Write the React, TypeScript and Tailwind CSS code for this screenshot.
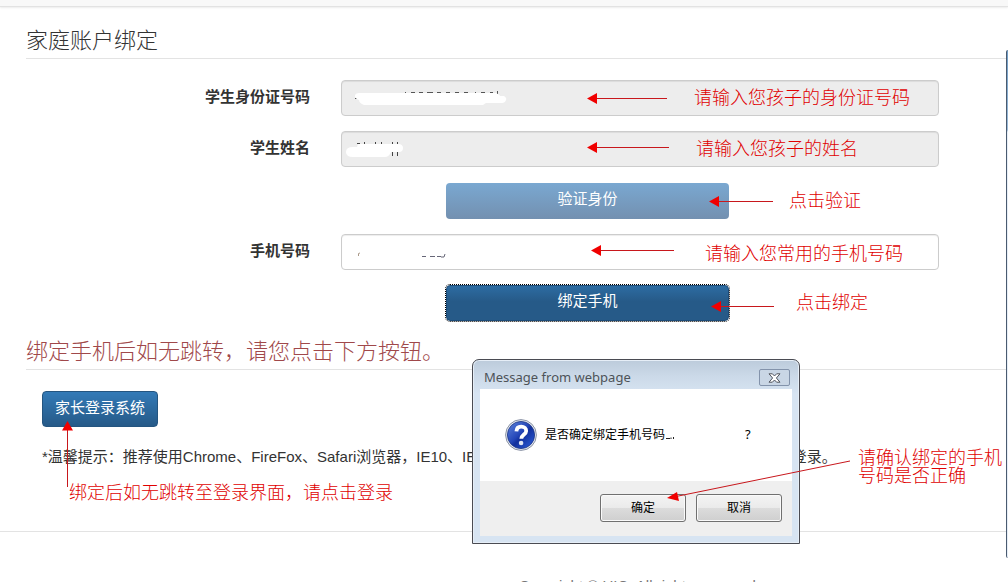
import type { ReactNode } from "react";

function LeftArrow({ className = "", length }: { className?: string; length: number }) {
  return (
    <svg className={`relative shrink-0 ${className}`} width={length} height="12" viewBox={`0 0 ${length} 12`} aria-hidden="true">
      <path d={`M8 6.5H${length}`} stroke="#c8171c" strokeWidth="1" fill="none" />
      <path d="M0 6.5L10 1V12Z" fill="#f00000" />
    </svg>
  );
}

function Note({ className = "", children }: { className?: string; children: ReactNode }) {
  return (
    <p className={`text-lg leading-[18px] font-light whitespace-nowrap text-[#e00000] ${className}`}>
      {children}
    </p>
  );
}

interface FieldProps {
  id: string;
  label: string;
  disabled?: boolean;
  scribble: ReactNode;
  children: ReactNode;
}

function Field({ id, label, disabled, scribble, children }: FieldProps) {
  return (
    <div className="flex gap-[31px]">
      <label htmlFor={id} className="w-[284px] shrink-0 pt-[7px] text-right leading-5 font-bold">
        {label}
      </label>
      <div className="relative max-w-[598px] grow">
        <input
          id={id}
          type="text"
          disabled={disabled}
          className="block h-9 w-full rounded border border-[#ccc] bg-white px-3 shadow-[inset_0_1px_1px_rgba(0,0,0,0.075)] outline-none disabled:bg-[#ededed]"
        />
        <div className="pointer-events-none absolute inset-0 flex items-center">
          <div className="w-[246px] shrink-0">{scribble}</div>
          {children}
        </div>
      </div>
    </div>
  );
}

function SectionTitle({ className, children }: { className: string; children: ReactNode }) {
  return <h2 className={`border-b border-[#e3e3e3] text-[22px] leading-[34px] font-light ${className}`}>{children}</h2>;
}

function DialogButton({ children }: { children: ReactNode }) {
  return (
    <button
      type="button"
      className="h-7 w-[86px] rounded-[3px] border border-[#707070] bg-[linear-gradient(#f3f3f3,#ebebeb_48%,#dcdcdc_50%,#cfcfcf)] text-xs text-black shadow-[inset_0_0_0_1px_#fafafa]"
    >
      {children}
    </button>
  );
}

function QuestionIcon() {
  return (
    <svg width="32" height="32" viewBox="0 0 32 32" aria-hidden="true" className="shrink-0">
      <defs>
        <linearGradient id="ball" x1="0" y1="0" x2="1" y2="1">
          <stop offset="0" stopColor="#5f86dc" />
          <stop offset="0.45" stopColor="#2446b8" />
          <stop offset="0.55" stopColor="#12309c" />
          <stop offset="1" stopColor="#2f62e0" />
        </linearGradient>
      </defs>
      <circle cx="16" cy="16" r="15.4" fill="#e6eaf0" stroke="#8b93a5" strokeWidth="1" />
      <circle cx="16" cy="16" r="13.6" fill="url(#ball)" stroke="#1b3384" strokeWidth="0.8" />
      <path d="M11.4 12.4C11.6 9 13.4 7.7 16.2 7.7C19.4 7.7 21.200 9.500 21.200 12C21.200 15.400 16.400 15.800 16.300 19.800" fill="none" stroke="#fff" strokeWidth="3.8" />
      <circle cx="16.1" cy="24" r="2.3" fill="#dfe5f3" />
    </svg>
  );
}

function ConfirmDialog() {
  return (
    <div
      role="dialog"
      aria-labelledby="dialog-title"
      className="w-[328px] rounded-t-[7px] border border-[#4a4b52] bg-[linear-gradient(#bccbdb,#cbd9e8_16px,#d7e4f2_34px,#d7e4f2)] px-[7px] pb-[7px] shadow-[inset_0_0_0_1px_#e6eef7]"
    >
      <div className="flex h-[29px] items-start justify-between pt-[9px] pr-0.5 pl-1">
        <h3 id="dialog-title" className="font-['Noto_Sans'] text-[13px] leading-4 text-[#4d5358]">
          Message from webpage
        </h3>
        <button type="button" aria-label="Close" className="flex h-[17px] w-[31px] items-center justify-center rounded-[2px] border border-[#8393ab] bg-[#c9d6e5]">
          <svg width="13" height="10" viewBox="0 0 13 10" aria-hidden="true">
            <path d="M1 0.8H4.4L6.5 3L8.6 0.8H12L8.4 5L12 9.2H8.6L6.5 7L4.4 9.2H1L4.6 5Z" fill="#fff" stroke="#50545e" strokeWidth="1" />
          </svg>
        </button>
      </div>
      <div className="flex h-[92px] items-center gap-2 bg-white pl-[25px] text-xs text-black">
        <QuestionIcon />
        <p className="flex items-center">
          是否确定绑定手机号码
          <svg width="10" height="12" viewBox="0 0 10 12" aria-hidden="true">
            <path d="M1 9.5H5M6 8.5V10M8.5 8V10" stroke="#222" fill="none" />
          </svg>
          <span className="ml-[70px] font-['Noto_Sans'] text-[13px]">?</span>
        </p>
      </div>
      <div className="flex h-[55px] justify-end gap-2.5 bg-[#efefef] pt-[13px] pr-2.5">
        <DialogButton>确定</DialogButton>
        <DialogButton>取消</DialogButton>
      </div>
    </div>
  );
}

function IdScribble() {
  return (
    <svg className="ml-3 h-5 w-40" viewBox="0 0 160 20" aria-hidden="true">
      <path d="M2 10.500H7M3 9.500H5M52.500 4V6M58 4.500H62M66 4.500H70M74 4.500H80M84 4.500H88M93 4.500H97M102 4.500H106M111 4.500H115M122.500 4V6M128 4.500H132M137 4.500H140M144.500 3V8" stroke="#555" fill="none" />
      <path d="M6 5H143Q147 7 147 8H151Q154 10 153 12Q152 15 149 15H133L130 17H11Q6 15 6 12Q1 10 2 7Q3 5 6 5Z" fill="#fff" />
    </svg>
  );
}

function NameScribble() {
  return (
    <svg className="ml-1 h-5 w-16" viewBox="0 0 64 20" aria-hidden="true">
      <path d="M12 4.500H15M19.500 3V6M30.500 3V6M36.500 3V6M47.500 3V6M52.500 3V6M47.500 13V17M52.500 13V17" stroke="#444" fill="none" />
      <path d="M13 5H53Q58 5 58 9Q58 13 54 13H46Q44 18 40 18H8Q1 18 1 13Q1 8 8 8H12Z" fill="#fff" />
    </svg>
  );
}

function PhoneScribble() {
  return (
    <svg className="ml-3 h-4 w-24" viewBox="0 0 96 16" aria-hidden="true">
      <path d="M5.500 12V9.500L7 9" stroke="#a98" fill="none" />
      <path d="M69 12.500H73M77 12.500H82M84 12.500H88M88 13H91L92 10" stroke="#667" fill="none" />
    </svg>
  );
}

export default function App() {
  return (
    <div className="relative h-screen overflow-hidden bg-white font-['Liberation_Sans','Noto_Sans_CJK_SC',sans-serif] text-[15px] text-[#333]">
      <div className="h-[7px] border-b border-[#e2e2e2] bg-[#f8f8f8] shadow-[0_1px_2px_rgba(0,0,0,0.08)]" />

      <main className="pl-[26px]">
        <SectionTitle className="mt-[17px]">家庭账户绑定</SectionTitle>

        <form className="mt-[21px] flex flex-col gap-4">
          <div className="flex flex-col gap-[15px]">
            <Field id="student-id" label="学生身份证号码" disabled scribble={<IdScribble />}>
              <LeftArrow length={80} />
              <Note className="ml-[27px]">请输入您孩子的身份证号码</Note>
            </Field>
            <Field id="student-name" label="学生姓名" disabled scribble={<NameScribble />}>
              <LeftArrow length={82} className="mb-1" />
              <Note className="ml-[27px]">请输入您孩子的姓名</Note>
            </Field>
          </div>
          <div className="flex flex-col gap-[15px]">
            <div className="flex items-center pl-[420px]">
              <button type="button" className="h-9 w-[283px] rounded bg-[linear-gradient(#7aa8d1,#7390b0)] pb-1 text-white">
                验证身份
              </button>
              <LeftArrow length={64} className="-ml-5" />
              <Note className="ml-4">点击验证</Note>
            </div>
            <Field id="phone" label="手机号码" scribble={<PhoneScribble />}>
              <LeftArrow length={83} className="mb-1 ml-1" />
              <Note className="mt-1 ml-[31px]">请输入您常用的手机号码</Note>
            </Field>
            <div className="flex items-center pl-[420px]">
              <button type="button" className="h-9 w-[283px] rounded border border-[#1d4b77] bg-[linear-gradient(#2d6ca2,#265a88_45%,#265a88)] pb-1 text-white outline-1 outline-dotted outline-black">
                绑定手机
              </button>
              <LeftArrow length={63} className="mt-1.5 -ml-[18px]" />
              <Note className="ml-[22px]">点击绑定</Note>
            </div>
          </div>
        </form>

        <SectionTitle className="mt-3.5 text-[#a0484a]">绑定手机后如无跳转，请您点击下方按钮。</SectionTitle>

        <div className="relative pt-[21px] pl-4">
          <a
            href="#login"
            className="inline-block h-9 rounded border border-[#245580] bg-[linear-gradient(#337ab7,#265a88)] px-3 pt-1.5 align-top leading-5 text-white"
          >
            家长登录系统
          </a>
          <p className="mt-5 leading-5 whitespace-nowrap">
            *温馨提示：推荐使用Chrome、FireFox、Safari浏览器，IE10、IE11
            <span className="ml-[300px]">登录。</span>
          </p>
          <Note className="mt-[17px] ml-[27px]">绑定后如无跳转至登录界面，请点击登录</Note>
          <svg className="absolute top-[51px] left-[34px] h-[66px] w-4" viewBox="0 0 16 66" aria-hidden="true">
            <path d="M7.500 8V66" stroke="#c8171c" fill="none" />
            <path d="M7.500 0L13 9.500H2Z" fill="#f00000" />
          </svg>
        </div>
      </main>

      <footer className="mt-[29px] border-t border-[#e3e3e3] pt-11 pl-[271px] text-center leading-5 text-[#777]">
        Copyright © UIC. All rights reserved.
      </footer>

      <div className="absolute top-[359px] left-[472px] flex items-start gap-[58px]">
        <ConfirmDialog />
        <Note className="pt-[90px]">
          请确认绑定的手机
          <br />
          号码是否正确
        </Note>
        <svg className="pointer-events-none absolute top-24 left-48 h-12 w-[190px]" viewBox="0 0 190 48" aria-hidden="true">
          <path d="M12 41.500L186 6" stroke="#c8171c" fill="none" />
          <path d="M3 43L13 37L15 46Z" fill="#f00000" />
        </svg>
      </div>

      <div className="absolute top-[50px] right-0 h-[508px] w-0.5 rounded-l-sm border-l border-[#4a5b70] bg-[linear-gradient(#6f9cc4,#9dbcd9_80px,#e6eef7_82px,#e6eef7)]" />
    </div>
  );
}
